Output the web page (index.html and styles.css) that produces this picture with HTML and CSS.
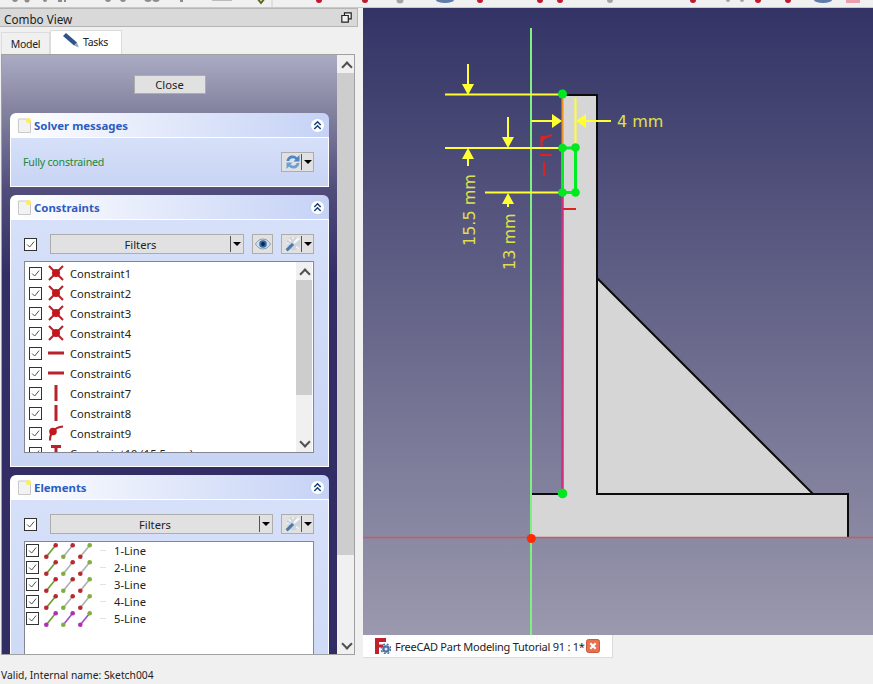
FILE: index.html
```html
<!DOCTYPE html>
<html lang="en">
<head>
<meta charset="utf-8">
<title>FreeCAD Part Modeling Tutorial 91</title>
<link rel="stylesheet" href="styles.css">
</head>
<body>
<svg class="defs" width="0" height="0" aria-hidden="true">
  <symbol id="check" viewBox="0 0 13 13"><path d="M2.5 6.5 5.5 9.5 10.8 3" fill="none" stroke="#444" stroke-width="1.1"/></symbol>
  <symbol id="doc" viewBox="0 0 13 15"><path d="M0.5 1h9l3 3v10.5h-12z" fill="#f2f2f2" stroke="#c9c9c9"/><circle cx="10.5" cy="2.5" r="2.5" fill="#fbee5a"/></symbol>
  <symbol id="collapse" viewBox="0 0 15 15"><circle cx="7.5" cy="7.5" r="7" fill="#fff" stroke="#bccbee" stroke-width="0.8"/><path d="M4.3 7 7.5 3.8 10.7 7M4.3 11 7.5 7.8 10.7 11" fill="none" stroke="#14407c" stroke-width="1.5"/></symbol>
  <symbol id="refresh" viewBox="0 0 16 16"><path d="M1.5 7C2 3.5 4.5 1.5 7.5 1.5c2 0 3.500 .8 4.500 2L14.500 1v6.500H8.500l2-2C9.800 4.800 8.800 4.300 7.700 4.300 6 4.300 4.700 5.400 4.300 7z" fill="#4c86c6"/><path d="M14.500 9C14 12.500 11.500 14.500 8.500 14.500c-2 0-3.500-.8-4.500-2L1.500 15V8.500h6l-2 2c.7.700 1.700 1.200 2.800 1.200 1.700 0 3-1.100 3.400-2.700z" fill="#6ba0d4"/></symbol>
  <symbol id="eye" viewBox="0 0 17 12"><path d="M0.500 6C3 2 5.500 .8 8.500 .8S14 2 16.500 6C14 10 11.500 11.200 8.500 11.200S3 10 .5 6z" fill="#d3deea" stroke="#7f95ad"/><circle cx="8.500" cy="6" r="4" fill="#2f6aa5"/><circle cx="8.500" cy="6" r="2" fill="#12263f"/></symbol>
  <symbol id="wand" viewBox="0 0 15 15"><circle cx="8" cy="7" r="6.500" fill="#cfd3da"/><path d="M1.500 13.500 7.500 7.500" stroke="#4a78ad" stroke-width="2.800"/><path d="M8.500 6.500 13 2" stroke="#f7f8fa" stroke-width="2.400"/><path d="M3.500 3 5.500 5M7.500 1V3M1.500 7H3.500M10.500 10l2 2" stroke="#f7f7f7" stroke-width="1.500"/></symbol>
  <symbol id="coincident" viewBox="0 0 16 16"><path d="M1 1 15 15M15 1 1 15" stroke="#b4252b" stroke-width="2.100"/><circle cx="8" cy="8" r="4" fill="#c4161c"/></symbol>
  <symbol id="horizontal" viewBox="0 0 16 16"><rect y="6.500" width="16" height="3" fill="#b8222a"/></symbol>
  <symbol id="vertical" viewBox="0 0 16 16"><rect x="6.500" width="3" height="16" fill="#b8222a"/></symbol>
  <symbol id="tangent" viewBox="0 0 16 16"><path d="M2 15.500C2 7 7 2.500 15 1.500" fill="none" stroke="#b8222a" stroke-width="2.200"/><circle cx="5" cy="6.500" r="3.800" fill="#c4161c"/></symbol>
  <symbol id="distance" viewBox="0 0 16 16"><path d="M3 1.500H13M8 1.500V16" stroke="#b8222a" stroke-width="3"/></symbol>
  <symbol id="line" viewBox="0 0 16 16"><path d="M2.300 13.700 11.700 2.300" stroke="var(--stroke)" stroke-width="1.700"/><circle cx="2.300" cy="13.700" r="2.300" fill="var(--start)"/><circle cx="11.700" cy="2.300" r="2.300" fill="var(--end)"/></symbol>
</svg>

<div class="toolbar">
  <svg class="toolbar-art" viewBox="0 0 873 8" aria-hidden="true">
    <g fill="#8b8b8b"><circle cx="15" cy="-1" r="3"/><circle cx="27" cy="0" r="2.500"/><circle cx="45" cy="0" r="2"/><rect x="58" y="-3" width="4" height="5"/><rect x="64" y="-3" width="2" height="5"/><circle cx="108" cy="-1" r="3"/><circle cx="123" cy="-1" r="3"/><circle cx="148" cy="-2" r="4"/><circle cx="156" cy="-2" r="4"/><rect x="180" y="-3" width="3" height="5"/><rect x="212" y="-3" width="20" height="4" fill="#bbb"/></g>
    <path d="M257 -2 261 3 265 -2" fill="none" stroke="#596a22" stroke-width="2"/>
    <path d="M272 0V8" stroke="#d0d0d0"/>
    <g fill="#c0182c"><circle cx="319" cy="0" r="3"/><circle cx="365" cy="0" r="3"/><circle cx="480" cy="0" r="3"/><circle cx="540" cy="0" r="3"/><circle cx="560" cy="0" r="3"/><circle cx="693" cy="0" r="3"/><circle cx="758" cy="0" r="3"/><circle cx="788" cy="0" r="3"/></g>
    <g fill="#a3a3a3"><circle cx="400" cy="0" r="3.500"/><circle cx="610" cy="0" r="3"/><circle cx="728" cy="0" r="2"/><circle cx="742" cy="0" r="2"/></g>
    <ellipse cx="445" cy="0" rx="9" ry="3" fill="#5d7ca8"/><ellipse cx="823" cy="0" rx="9" ry="3" fill="#5d7ca8"/>
    <rect x="846" y="-2" width="14" height="5" fill="#e9a0ac"/>
  </svg>
</div>

<div class="workspace">
  <aside class="left-column">
    <header class="dock-title">
      <span class="dock-label">Combo View</span>
      <svg class="float-icon" viewBox="0 0 11 11" aria-hidden="true"><path d="M3.500 3V.8h6.700v6H7.800M.8 3.500h6.500v6.700H.8z" fill="#f0f0f0" stroke="#222" stroke-width="1.200"/></svg>
    </header>
    <nav class="tabs">
      <span class="tab">Model</span>
      <span class="tab tab-active">
        <svg class="pencil" viewBox="0 0 16 15" aria-hidden="true"><path d="M0 3 3 0 14 9.500 11 12.500z" fill="#2f5488"/><path d="M11 12.500 14 9.500 15.800 14.500z" fill="#9aa6b8"/></svg>
        Tasks
      </span>
    </nav>
    <div class="panel">
      <div class="task-area">
        <div class="close-row"><button class="close-button">Close</button></div>

        <section class="box">
          <header class="box-head">
            <svg class="doc"><use href="#doc"/></svg>
            <h2>Solver messages</h2>
            <svg class="collapse"><use href="#collapse"/></svg>
          </header>
          <div class="box-body solver-body">
            <span class="status-ok">Fully constrained</span>
            <span class="tool-button">
              <svg class="tool-icon"><use href="#refresh"/></svg><i class="tool-arrow"></i>
            </span>
          </div>
        </section>

        <section class="box">
          <header class="box-head">
            <svg class="doc"><use href="#doc"/></svg>
            <h2>Constraints</h2>
            <svg class="collapse"><use href="#collapse"/></svg>
          </header>
          <div class="box-body constraints-body">
            <div class="filter-row">
              <svg class="check"><use href="#check"/></svg>
              <span class="combo"><span class="combo-label">Filters</span><i class="tool-arrow"></i></span>
              <span class="eye-button"><svg class="eye"><use href="#eye"/></svg></span>
              <span class="tool-button"><svg class="tool-icon"><use href="#wand"/></svg><i class="tool-arrow"></i></span>
            </div>
            <div class="list constraint-list">
              <ul class="rows">
                <li><svg class="check"><use href="#check"/></svg><svg class="sym"><use href="#coincident"/></svg>Constraint1</li>
                <li><svg class="check"><use href="#check"/></svg><svg class="sym"><use href="#coincident"/></svg>Constraint2</li>
                <li><svg class="check"><use href="#check"/></svg><svg class="sym"><use href="#coincident"/></svg>Constraint3</li>
                <li><svg class="check"><use href="#check"/></svg><svg class="sym"><use href="#coincident"/></svg>Constraint4</li>
                <li><svg class="check"><use href="#check"/></svg><svg class="sym"><use href="#horizontal"/></svg>Constraint5</li>
                <li><svg class="check"><use href="#check"/></svg><svg class="sym"><use href="#horizontal"/></svg>Constraint6</li>
                <li><svg class="check"><use href="#check"/></svg><svg class="sym"><use href="#vertical"/></svg>Constraint7</li>
                <li><svg class="check"><use href="#check"/></svg><svg class="sym"><use href="#vertical"/></svg>Constraint8</li>
                <li><svg class="check"><use href="#check"/></svg><svg class="sym"><use href="#tangent"/></svg>Constraint9</li>
                <li><svg class="check"><use href="#check"/></svg><svg class="sym"><use href="#distance"/></svg>Constraint10 (15.5 mm)</li>
              </ul>
              <div class="list-scroll">
                <span class="chev chev-up"></span>
                <span class="list-thumb"></span>
                <span class="chev chev-down"></span>
              </div>
            </div>
          </div>
        </section>

        <section class="box">
          <header class="box-head">
            <svg class="doc"><use href="#doc"/></svg>
            <h2>Elements</h2>
            <svg class="collapse"><use href="#collapse"/></svg>
          </header>
          <div class="box-body elements-body">
            <div class="filter-row">
              <svg class="check"><use href="#check"/></svg>
              <span class="combo"><span class="combo-label">Filters</span><i class="tool-arrow"></i></span>
              <span class="tool-button"><svg class="tool-icon"><use href="#wand"/></svg><i class="tool-arrow"></i></span>
            </div>
            <div class="list element-list">
              <ul class="rows element-rows">
                <li><svg class="check"><use href="#check"/></svg><svg class="ln rgr"><use href="#line"/></svg><svg class="ln gwr"><use href="#line"/></svg><svg class="ln rwg"><use href="#line"/></svg><i class="dash"></i>1-Line</li>
                <li><svg class="check"><use href="#check"/></svg><svg class="ln rgr"><use href="#line"/></svg><svg class="ln gwr"><use href="#line"/></svg><svg class="ln rwg"><use href="#line"/></svg><i class="dash"></i>2-Line</li>
                <li><svg class="check"><use href="#check"/></svg><svg class="ln rgr"><use href="#line"/></svg><svg class="ln gwr"><use href="#line"/></svg><svg class="ln rwg"><use href="#line"/></svg><i class="dash"></i>3-Line</li>
                <li><svg class="check"><use href="#check"/></svg><svg class="ln rgr"><use href="#line"/></svg><svg class="ln gwr"><use href="#line"/></svg><svg class="ln rwg"><use href="#line"/></svg><i class="dash"></i>4-Line</li>
                <li><svg class="check"><use href="#check"/></svg><svg class="ln pgp"><use href="#line"/></svg><svg class="ln gpp"><use href="#line"/></svg><svg class="ln ppg"><use href="#line"/></svg><i class="dash"></i>5-Line</li>
              </ul>
            </div>
          </div>
        </section>
      </div>
      <div class="panel-scroll">
        <span class="chev chev-up"></span>
        <span class="panel-thumb"></span>
        <span class="chev chev-down"></span>
      </div>
    </div>
    <footer class="status-bar">Valid, Internal name: Sketch004</footer>
  </aside>

  <main class="right-column">
    <div class="viewport">
      <svg class="scene" viewBox="363 8 510 627" aria-label="Sketch view">
        <path class="part" d="M563 95H597V278L813 494H848V537.500H531V494H563Z"/>
        <path class="part-edge" d="M563 95H597V278L813 494H848V537M597 278V494H813M531 494H563"/>
        <path class="axis-x" d="M363 537.500H873"/>
        <path class="axis-y" d="M531 28V635"/>
        <path class="edge-pink" d="M562.500 193V494"/>
        <path class="edge-orange" d="M562.500 95V148"/>
        <path class="dim" d="M445 94.500H562M445 148H562M485 192.500H562M468 64V90M508 117V143M468 166V153M508 207V198M531 121H556M611 121H582M575.500 98V147"/>
        <path class="dim-head" d="M462 84H474L468 95ZM502 137H514L508 148ZM462 159H474L468 148ZM502 204H514L508 193ZM552 114V128L562 121ZM586 114V128L576 121Z"/>
        <text class="dim-text" x="617" y="127">4 mm</text>
        <text class="dim-text" transform="translate(475 246) rotate(-90)">15.5 mm</text>
        <text class="dim-text" transform="translate(515 270) rotate(-90)">13 mm</text>
        <path class="constraint-mark" d="M541.500 147V137H546M546 137Q548 136 552 135M540 155H552M544 162V176M563 209H576"/>
        <path class="constraint-fill" d="M542 136H548L542 142Z"/>
        <path class="rect-green" d="M562.500 148V192.500H575.500V148Z"/>
        <g class="point-green">
          <circle cx="562.500" cy="94" r="4.500"/><circle cx="562.500" cy="148" r="4.300"/><circle cx="575.500" cy="147.500" r="4.300"/><circle cx="562.500" cy="192.500" r="4.300"/><circle cx="575.500" cy="192.500" r="4.300"/><circle cx="562.500" cy="493.500" r="4.800"/>
        </g>
        <circle class="point-red" cx="531.300" cy="538.500" r="4.500"/>
      </svg>
    </div>
    <div class="doc-tabs">
      <span class="doc-tab">
        <svg class="fc-logo" viewBox="0 0 16 16" aria-hidden="true"><path d="M0 0H11V4H4V6.500H8V9.500H4V16H0Z" fill="#c1212a"/><circle cx="11" cy="11" r="3.800" fill="#4a6fa5"/><circle cx="11" cy="11" r="4.800" fill="none" stroke="#4a6fa5" stroke-width="1.400" stroke-dasharray="2 1.800"/><circle cx="11" cy="11" r="1.500" fill="#e4ebf4"/></svg>
        FreeCAD Part Modeling Tutorial 91 : 1*
        <svg class="tab-close" viewBox="0 0 14 14" aria-hidden="true"><rect x=".5" y=".5" width="13" height="13" rx="2" fill="#e8704f" stroke="#c9583c"/><path d="M4.300 4.300 9.700 9.700M9.700 4.300 4.300 9.700" stroke="#fff" stroke-width="2.200"/></svg>
      </span>
    </div>
  </main>
</div>
</body>
</html>
```

FILE: styles.css
```css
* { box-sizing: border-box; }

html, body {
  margin: 0;
  height: 100%;
  overflow: hidden;
}

body {
  width: 873px;
  height: 684px;
  display: flex;
  flex-direction: column;
  background: #f0f0f0;
  color: #222;
  font: 11.2px "Noto Sans", "Open Sans", sans-serif;
}

.defs { position: absolute; }

.toolbar {
  height: 8px;
  flex: none;
  overflow: hidden;
  border-bottom: 1px solid #c8c8cc;
}

.toolbar-art { display: block; width: 873px; height: 8px; }

.workspace { flex: 1; display: flex; min-height: 0; }

.left-column {
  width: 363px;
  flex: none;
  display: flex;
  flex-direction: column;
}

.dock-title {
  height: 19px;
  width: 358px;
  flex: none;
  display: flex;
  align-items: center;
  justify-content: space-between;
  padding: 0 5px 0 4px;
  background: #d9d9d9;
  border: 1px solid #b5b5b5;
  border-left: 0;
}

.dock-label { font-size: 11.700px; padding-top: 2px; }

.float-icon { width: 11px; height: 11px; }

.tabs {
  height: 27px;
  flex: none;
  display: flex;
  align-items: flex-end;
  padding-left: 1px;
}

.tab {
  height: 22px;
  width: 49px;
  display: flex;
  align-items: center;
  justify-content: center;
  background: #f0f0f0;
  border: 1px solid #dcdcdc;
  border-bottom: 0;
  font-size: 10.500px;
  letter-spacing: -0.300px;
}

.tab-active {
  height: 24px;
  width: 72px;
  gap: 4px;
  justify-content: flex-start;
  padding: 0 0 1px 12px;
  background: #fff;
}

.pencil { width: 16px; height: 15px; flex: none; margin-bottom: 3px; }

.panel {
  flex: 1;
  min-height: 0;
  width: 354px;
  margin-left: 1px;
  display: flex;
  border: 1px solid #a0a0a0;
  background: #f0f0f0;
}

.task-area {
  flex: 1;
  min-width: 0;
  overflow: hidden;
  padding: 20px 8px 0;
  background: linear-gradient(180deg, #aaabc3 0, #84839f 55px, #504d7c 135px, #332e66 220px, #312c64 100%);
}

.close-row { display: flex; justify-content: center; margin-bottom: 19px; }

.close-button {
  width: 72px;
  height: 19px;
  padding: 0;
  background: #e1e1e1;
  border: 1px solid #adadad;
  color: #222;
  font: inherit;
}

.box { margin-bottom: 8px; }

.box-head {
  height: 25px;
  display: flex;
  align-items: center;
  padding: 0 4px 0 8px;
  border-radius: 6px 6px 0 0;
  border-bottom: 1px solid #fff;
  background: linear-gradient(90deg, #fff, #c5d2f6);
}

.doc { width: 13px; height: 15px; flex: none; margin-right: 3px; }

.box-head h2 {
  flex: 1;
  margin: 0;
  color: #2d5cc0;
  font-size: 11.400px;
  font-weight: 700;
}

.collapse { width: 15px; height: 15px; flex: none; }

.box-body {
  padding: 0 14px 0 13px;
  border: 1px solid #fff;
  border-top: 0;
  background: linear-gradient(180deg, #d6e0f9, #c8d4f4);
}

.solver-body {
  height: 49px;
  display: flex;
  align-items: center;
  justify-content: space-between;
  padding-left: 12px;
}

.status-ok { color: #16883a; font-size: 10.600px; letter-spacing: -0.200px; }

.tool-button {
  width: 33px;
  height: 20px;
  flex: none;
  display: flex;
  align-items: center;
  background: #e1e1e1;
  border: 1px solid #adadad;
}

.tool-icon { width: 16px; height: 16px; margin-left: 3px; flex: none; }

.tool-arrow {
  flex: 1;
  align-self: stretch;
  position: relative;
  border-left: 1px solid #555;
  margin-block: 1px;
}

.tool-arrow::after {
  content: "";
  position: absolute;
  left: 50%;
  top: 50%;
  margin: -2px 0 0 -4px;
  border: 4px solid transparent;
  border-top: 4px solid #000;
  border-bottom: 0;
}

.constraints-body { height: 247px; padding-top: 14px; }

.elements-body { height: 300px; padding-top: 14px; }

.filter-row { display: flex; align-items: center; height: 20px; margin-bottom: 7px; }

.filter-row .check { margin-right: 13px; }

.check {
  width: 13px;
  height: 13px;
  flex: none;
  background: #fff;
  border: 1px solid #333;
}

.combo {
  flex: 1;
  height: 20px;
  display: flex;
  align-items: center;
  margin-right: 8px;
  background: #e1e1e1;
  border: 1px solid #adadad;
}

.combo-label { flex: 1; text-align: center; }

.combo .tool-arrow { flex: 0 0 13px; }

.eye-button {
  width: 21px;
  height: 20px;
  flex: none;
  display: flex;
  align-items: center;
  justify-content: center;
  margin-right: 8px;
  background: #e1e1e1;
  border: 1px solid #adadad;
}

.eye { width: 16px; height: 12px; }

.list {
  position: relative;
  overflow: hidden;
  background: #fff;
  border: 1px solid #828790;
}

.constraint-list { height: 192px; padding: 1px 18px 0 4px; }

.element-list { height: 160px; padding: 0 0 0 1px; }

.rows { margin: 0; padding: 0; list-style: none; }

.rows li {
  height: 20px;
  display: flex;
  align-items: center;
  white-space: nowrap;
}

.sym { width: 16px; height: 16px; flex: none; margin: 0 6px; }

.element-rows li { height: 17px; }

.ln { width: 16px; height: 16px; flex: none; margin-right: 1px; }

.element-rows .check { margin-right: 5px; }

.dash {
  width: 6px;
  height: 1px;
  margin: 0 8px 0 5px;
  background: #e2e2e2;
}

.rgr { --stroke: #6c9e36; --start: #b8282e; --end: #b8282e; }
.gwr { --stroke: #b0b0b0; --start: #7fae3f; --end: #b8282e; }
.rwg { --stroke: #b0b0b0; --start: #b8282e; --end: #7fae3f; }
.pgp { --stroke: #6c9e36; --start: #b030b0; --end: #b030b0; }
.gpp { --stroke: #a050c8; --start: #7fae3f; --end: #b030b0; }
.ppg { --stroke: #a050c8; --start: #b030b0; --end: #7fae3f; }

.list-scroll {
  position: absolute;
  top: 0;
  right: 1px;
  bottom: 0;
  width: 16px;
  display: flex;
  flex-direction: column;
  align-items: center;
  background: #f0f0f0;
}

.list-thumb { width: 100%; height: 115px; flex: none; background: #cdcdcd; }

.panel-scroll {
  width: 17px;
  flex: none;
  display: flex;
  flex-direction: column;
  align-items: center;
  background: #f0f0f0;
}

.panel-thumb { width: 100%; flex: none; height: 482px; background: #cdcdcd; }

.chev {
  width: 100%;
  height: 18px;
  flex: none;
  position: relative;
}

.panel-scroll .chev-down { margin-top: auto; }
.list-scroll .chev-down { margin-top: auto; }

.chev::after {
  content: "";
  position: absolute;
  left: 50%;
  top: 50%;
  width: 6px;
  height: 6px;
  margin: -1px 0 0 -3px;
  border-top: 2px solid #505050;
  border-left: 2px solid #505050;
  transform: rotate(45deg);
}

.chev-down::after { margin-top: -5px; transform: rotate(225deg); }

.status-bar {
  height: 29px;
  flex: none;
  display: flex;
  align-items: center;
  padding: 10px 0 0 1px;
  font-size: 10.300px;
}

.right-column {
  flex: 1;
  min-width: 0;
  display: flex;
  flex-direction: column;
}

.viewport {
  height: 627px;
  flex: none;
  background: linear-gradient(180deg, #333366, #9a99ae);
}

.scene { display: block; width: 510px; height: 627px; }

.part { fill: #d6d6d6; }
.part-edge { fill: none; stroke: #0c0c0c; stroke-width: 2; }
.axis-x { stroke: #d0585c; stroke-width: 1.500; fill: none; }
.axis-y { stroke: #80f080; stroke-width: 2; fill: none; }
.edge-pink { stroke: #cf2f7e; stroke-width: 2.500; fill: none; }
.edge-orange { stroke: #f09020; stroke-width: 2; fill: none; }
.dim { stroke: #ffff33; stroke-width: 2; fill: none; }
.dim-head { fill: #ffff33; }
.dim-text { fill: #e0e04a; font: 16px "DejaVu Sans", sans-serif; }
.constraint-mark { stroke: #dd2222; stroke-width: 2; fill: none; }
.constraint-fill { fill: #dd2222; }
.rect-green { stroke: #00ee22; stroke-width: 3; fill: none; }
.point-green { fill: #00e81e; }
.point-red { fill: #ff2a00; }

.doc-tabs { flex: 1; display: flex; align-items: flex-start; }

.doc-tab {
  width: 250px;
  height: 23px;
  display: flex;
  align-items: center;
  padding: 0 12px;
  background: #fff;
  border: solid #dcdcdc;
  border-width: 0 1px 1px 0;
  font-size: 11px;
  letter-spacing: -0.250px;
  white-space: nowrap;
}

.fc-logo { width: 16px; height: 16px; flex: none; margin-right: 4px; }

.tab-close { width: 14px; height: 14px; flex: none; margin-left: auto; }
```
